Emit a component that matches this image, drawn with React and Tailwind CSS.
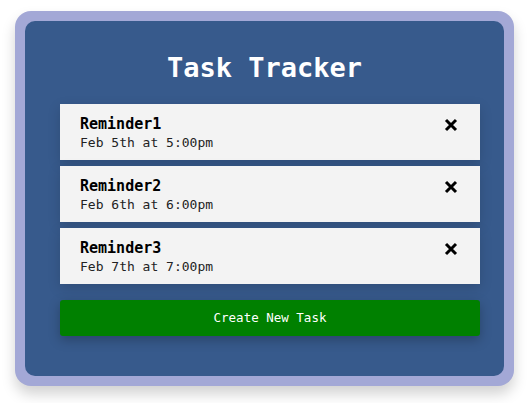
import React from "react";

const tasks = [
  { title: "Reminder1", date: "Feb 5th at 5:00pm" },
  { title: "Reminder2", date: "Feb 6th at 6:00pm" },
  { title: "Reminder3", date: "Feb 7th at 7:00pm" },
];

export default function App() {
  return (
    <div className="w-[529px] h-[403px] bg-white pt-[11px] pl-[15px]" style={{ fontFamily: '"DejaVu Sans Mono", monospace' }}>
      <div className="w-[499px] h-[375px] rounded-[16px] bg-[#a3a8d6] p-[10px] shadow-[0_8px_14px_rgba(0,0,0,0.18)]">
        <div className="h-full rounded-[10px] bg-[#375a8c] pl-[35px] pr-[24px] pt-[30px]">
          <h1 className="text-center text-white font-bold text-[27px] leading-[34px] h-[53px] -ml-[11px]">Task Tracker</h1>
          <div className="flex flex-col gap-[6px]">
            {tasks.map((t) => (
              <div key={t.title} className="h-[56px] bg-[#f3f3f3] flex items-start justify-between pl-[20px] pr-[22px] pt-[11px] shadow-[0_4px_12px_rgba(0,0,0,0.15)]">
                <div>
                  <div className="font-bold text-[15px] leading-[18px] text-black">{t.title}</div>
                  <div className="mt-[1px] text-[13px] leading-[18px] text-[#222]">{t.date}</div>
                </div>
                <svg width="14" height="14" viewBox="0 0 14 14" className="mt-[3px]">
                  <path d="M2 2 L12 12 M12 2 L2 12" stroke="#000" strokeWidth="3" strokeLinecap="butt" />
                </svg>
              </div>
            ))}
          </div>
          <button className="mt-[16px] w-full h-[36px] rounded-[3px] bg-[#008000] text-white text-[12.5px] shadow-[0_4px_12px_rgba(0,0,0,0.25)]">Create New Task</button>
        </div>
      </div>
    </div>
  );
}
